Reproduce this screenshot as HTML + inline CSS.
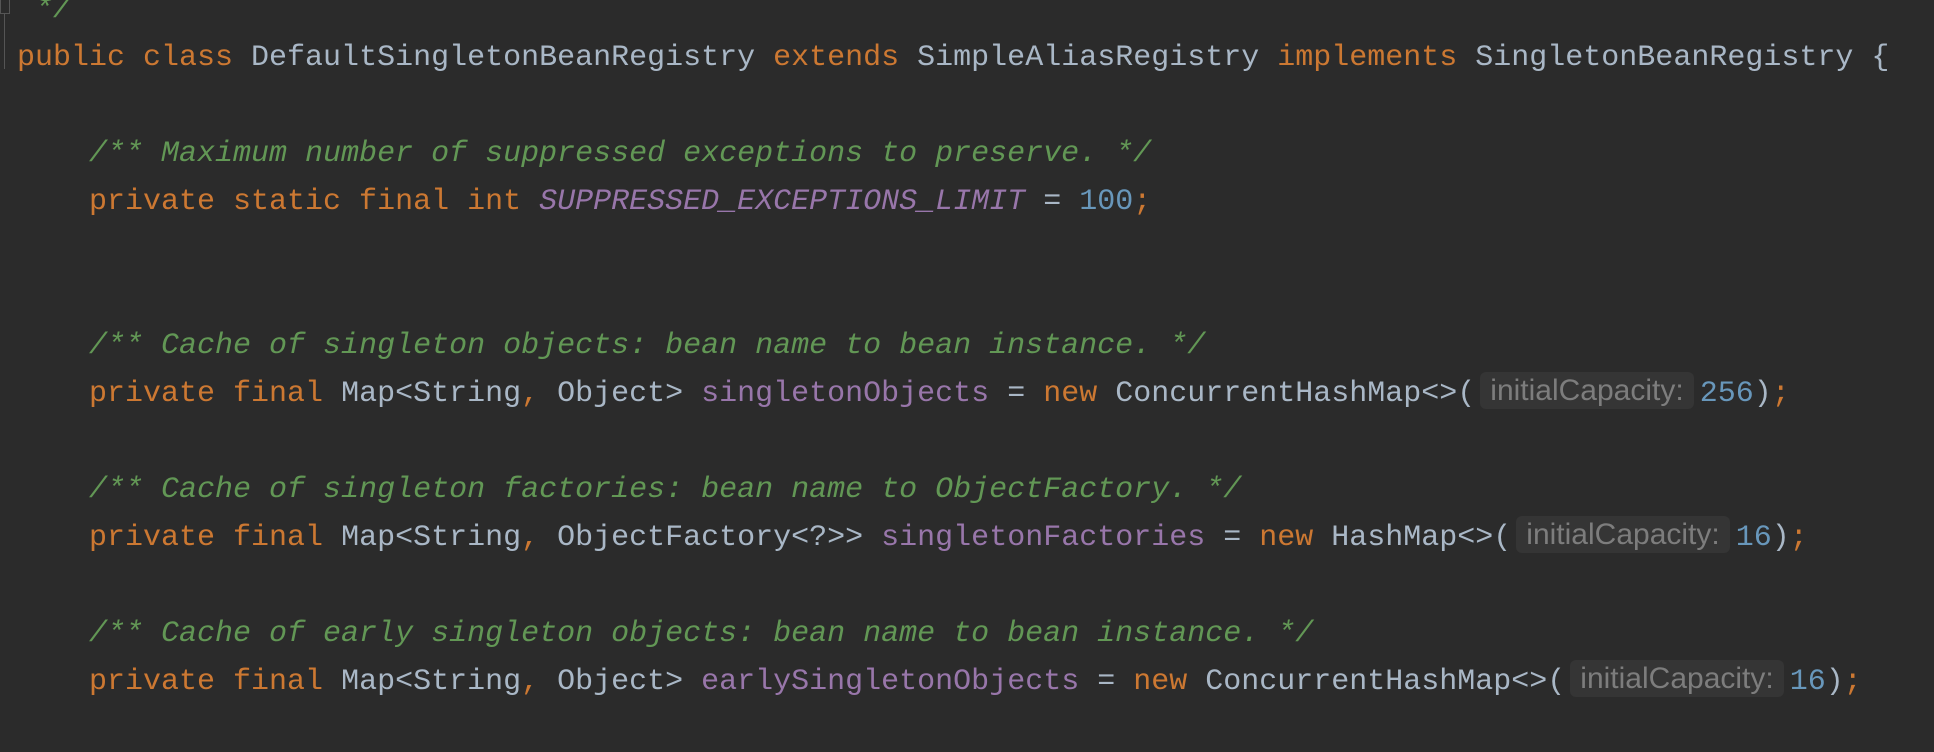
<!DOCTYPE html>
<html><head><meta charset="utf-8"><style>
html,body{margin:0;padding:0;background:#2b2b2b;width:1934px;height:752px;overflow:hidden}
.code{position:absolute;left:17px;top:-14px;font-family:"Liberation Mono",monospace;font-size:30px;line-height:48px;color:#a9b7c6}
.l{height:48px;white-space:pre}
.k{color:#cc7832}.c{color:#629755;font-style:italic}.f{color:#9876aa}.fi{color:#9876aa;font-style:italic}.n{color:#6897bb}
.h{display:inline-block;font-family:"Liberation Sans",sans-serif;font-size:30px;line-height:37px;height:37px;color:#7d7d7d;background:#353535;border-radius:6px;padding:0 10px;margin:0 6px 0 5px;vertical-align:1px}
.g1{position:absolute;left:0;top:0;width:10px;height:14px;border:1px solid #555;border-top:none;box-sizing:border-box}
.g2{position:absolute;left:4px;top:14px;width:1px;height:55px;background:#555}
</style></head><body>
<div class="g1"></div><div class="g2"></div>
<div class="code"><div class="l"><span class="c"> */</span></div><div class="l"><span class="k">public class </span>DefaultSingletonBeanRegistry <span class="k">extends </span>SimpleAliasRegistry <span class="k">implements </span>SingletonBeanRegistry {</div><div class="l"></div><div class="l">    <span class="c">/** Maximum number of suppressed exceptions to preserve. */</span></div><div class="l">    <span class="k">private static final int </span><span class="fi">SUPPRESSED_EXCEPTIONS_LIMIT</span> = <span class="n">100</span><span class="k">;</span></div><div class="l"></div><div class="l"></div><div class="l">    <span class="c">/** Cache of singleton objects: bean name to bean instance. */</span></div><div class="l">    <span class="k">private final </span>Map&lt;String<span class="k">, </span>Object&gt; <span class="f">singletonObjects</span> = <span class="k">new </span>ConcurrentHashMap&lt;&gt;(<span class="h">initialCapacity:</span><span class="n">256</span>)<span class="k">;</span></div><div class="l"></div><div class="l">    <span class="c">/** Cache of singleton factories: bean name to ObjectFactory. */</span></div><div class="l">    <span class="k">private final </span>Map&lt;String<span class="k">, </span>ObjectFactory&lt;?&gt;&gt; <span class="f">singletonFactories</span> = <span class="k">new </span>HashMap&lt;&gt;(<span class="h">initialCapacity:</span><span class="n">16</span>)<span class="k">;</span></div><div class="l"></div><div class="l">    <span class="c">/** Cache of early singleton objects: bean name to bean instance. */</span></div><div class="l">    <span class="k">private final </span>Map&lt;String<span class="k">, </span>Object&gt; <span class="f">earlySingletonObjects</span> = <span class="k">new </span>ConcurrentHashMap&lt;&gt;(<span class="h">initialCapacity:</span><span class="n">16</span>)<span class="k">;</span></div></div>
</body></html>
